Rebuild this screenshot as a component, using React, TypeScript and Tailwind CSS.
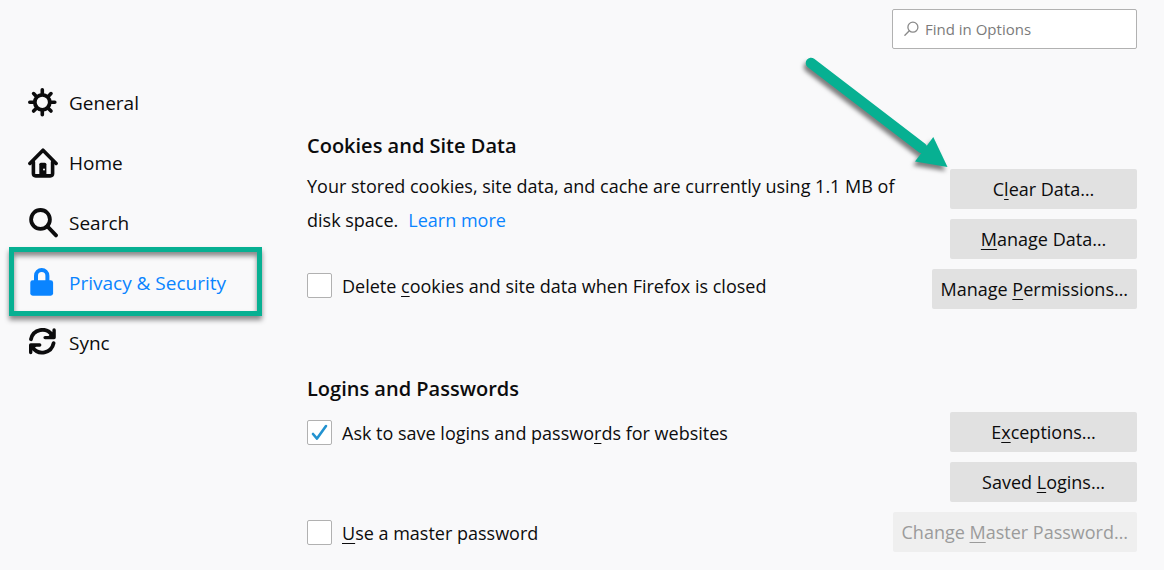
import React from "react";

type IconProps = { children: React.ReactNode };

function Icon({ children }: IconProps) {
  return (
    <svg
      viewBox="0 0 30 30"
      className="size-[30px] shrink-0"
      fill="none"
      stroke="currentColor"
      strokeLinecap="round"
      strokeLinejoin="round"
      aria-hidden="true"
    >
      {children}
    </svg>
  );
}

const gear = (
  <Icon>
    <circle cx="14.3" cy="14.3" r="7.5" strokeWidth="3.8" />
    <path
      strokeWidth="3.6"
      d="M14.3 6V1.8M14.3 22.6v4.2M6 14.3H1.8M22.6 14.3h4.2M8.4 8.4 5.6 5.6M20.2 8.4l2.8-2.8M8.4 20.2 5.6 23M20.2 20.2 23 23"
    />
  </Icon>
);

const home = (
  <Icon>
    <path strokeWidth="3.6" d="M1.9 15.4 15 2.2l13.1 13.2" />
    <path strokeWidth="3.6" d="M5.4 14v11.6q0 2.3 2.3 2.3h14.6q2.3 0 2.3-2.3V14" />
    <path
      fill="currentColor"
      stroke="none"
      d="M11.3 28.5V16.3q0-1.6 1.6-1.6h3.9q1.6 0 1.6 1.6v12.2z"
    />
    <circle cx="16" cy="21.6" r="1" fill="#f9f9fa" stroke="none" />
  </Icon>
);

const search = (
  <Icon>
    <circle cx="12.5" cy="11.4" r="9.4" strokeWidth="3.8" />
    <path strokeWidth="3.8" d="m19.4 18.4 8.6 9" />
  </Icon>
);

const lock = (
  <Icon>
    <path strokeWidth="4" strokeLinecap="butt" d="M8 14V7.7a5.7 5.7 0 0 1 11.4 0V14" />
    <rect x="2.3" y="12.3" width="22.8" height="15.4" rx="2.4" fill="currentColor" stroke="none" />
  </Icon>
);

const sync = (
  <Icon>
    <path strokeWidth="3.8" d="M3 11.2A11.6 11.6 0 0 1 24 7" />
    <path strokeWidth="3.8" d="M25.6 15.2A11.6 11.6 0 0 1 4.6 19.4" />
    <path strokeWidth="3.4" d="M26.1 2v7.6h-9" />
    <path strokeWidth="3.4" d="M2.7 24.6V17h9" />
    <path fill="currentColor" stroke="none" d="M19 9.5 26 2.5v7zM9.6 17l-7 7V17z" />
  </Icon>
);

const categories = [
  { name: "General", icon: gear },
  { name: "Home", icon: home },
  { name: "Search", icon: search },
  { name: "Privacy & Security", icon: lock, current: true },
  { name: "Sync", icon: sync },
];

function Key({ children }: { children: React.ReactNode }) {
  return <span className="underline decoration-1 underline-offset-3">{children}</span>;
}

type ActionProps = { children: React.ReactNode; disabled?: boolean };

function Action({ children, disabled }: ActionProps) {
  return (
    <button
      type="button"
      disabled={disabled}
      className="h-10 min-w-[187px] rounded-xs bg-[#e1e1e1] px-[9px] whitespace-nowrap disabled:bg-[#efefef] disabled:text-[#9b9b9b]"
    >
      {children}
    </button>
  );
}

type CheckProps = { id: string; checked?: boolean; children: React.ReactNode };

function Check({ id, checked, children }: CheckProps) {
  return (
    <div className="flex h-10 items-center gap-[10px]">
      <span className="grid shrink-0">
        <input
          id={id}
          type="checkbox"
          defaultChecked={checked}
          className="peer col-start-1 row-start-1 size-[25px] appearance-none rounded-xs border border-[#b1b1b1] bg-white"
        />
        <svg
          viewBox="0 0 25 25"
          className="pointer-events-none invisible col-start-1 row-start-1 size-[25px] peer-checked:visible"
          fill="none"
          stroke="#2292d0"
          strokeWidth="2.6"
          strokeLinecap="round"
          strokeLinejoin="round"
          aria-hidden="true"
        >
          <path d="m6 14 4 4.6L19 6" />
        </svg>
      </span>
      <label htmlFor={id} className="pt-0.5">
        {children}
      </label>
    </div>
  );
}

export default function App() {
  return (
    <div className="flex min-h-screen bg-[#f9f9fa] font-['Open_Sans','Noto_Sans',sans-serif] text-[18px] leading-[34px] text-[#0c0c0d]">
      <nav aria-label="Categories" className="w-[280px] shrink-0 pt-[73px] text-[19px]">
        <ul>
          {categories.map(({ name, icon, current }) => (
            <li key={name} className="relative">
              <a
                href="#"
                aria-current={current ? "page" : undefined}
                className="flex h-15 items-center gap-[11px] pl-7 aria-[current=page]:text-[#0a84ff]"
              >
                {icon}
                {name}
              </a>
              {current && (
                <span className="pointer-events-none absolute -top-[6px] right-[18px] -bottom-[3px] left-[9px] border-5 border-[#07b092] shadow-[0_4px_5px_rgba(0,0,0,0.45),inset_0_4px_5px_rgba(0,0,0,0.45)]" />
              )}
            </li>
          ))}
        </ul>
      </nav>

      <main className="min-w-0 flex-1 pt-[9px] pr-[27px] pl-[27px]">
        <div className="flex justify-end">
          <div className="flex h-10 w-[245px] items-center gap-[5px] rounded-xs border border-[#b1b1b1] bg-white px-[11px]">
            <svg
              viewBox="0 0 16 16"
              className="size-4 shrink-0"
              fill="none"
              stroke="#8a8a8a"
              strokeWidth="1.3"
              strokeLinecap="round"
              aria-hidden="true"
            >
              <circle cx="8.9" cy="6.2" r="5" />
              <path d="M5.3 9.8.9 14.2" />
            </svg>
            <input
              type="search"
              aria-label="Find in Options"
              placeholder="Find in Options"
              className="w-full min-w-0 bg-transparent text-[15px] leading-5 outline-none placeholder:text-[#7b7b7b]"
            />
          </div>
        </div>

        <section className="pt-20">
          <h2 className="text-[20px] font-semibold">Cookies and Site Data</h2>
          <div className="flex justify-between gap-5 pt-[6px]">
            <div className="min-w-0 flex-1">
              <p className="max-w-[600px]">
                Your stored cookies, site data, and cache are currently using 1.1 MB of disk space.
                <a href="#" className="ml-[10px] text-[#0a84ff]">
                  Learn more
                </a>
              </p>
              <div className="pt-7">
                <Check id="delete-cookies">
                  Delete <Key>c</Key>ookies and site data when Firefox is closed
                </Check>
              </div>
            </div>
            <div className="relative flex shrink-0 flex-col items-end gap-[10px]">
              <Action>
                C<Key>l</Key>ear Data…
              </Action>
              <Action>
                <Key>M</Key>anage Data…
              </Action>
              <Action>
                Manage <Key>P</Key>ermissions…
              </Action>
              <svg
                viewBox="0 0 160 130"
                className="pointer-events-none absolute right-[180px] bottom-[128px] h-[130px] w-[160px] drop-shadow-[-2px_4px_2px_rgba(0,0,0,0.5)]"
                aria-hidden="true"
              >
                <path d="M14 12 125 97" stroke="#07b092" strokeWidth="10.5" strokeLinecap="round" />
                <path d="m136.300 86 14.200 30-32.500-5.500z" fill="#07b092" />
              </svg>
            </div>
          </div>
        </section>

        <section className="pt-[63px]">
          <h2 className="text-[20px] font-semibold">Logins and Passwords</h2>
          <div className="flex justify-between gap-5 pt-[6px]">
            <div className="flex min-w-0 flex-1 flex-col gap-15">
              <Check id="save-logins" checked>
                Ask to save logins and passwo<Key>r</Key>ds for websites
              </Check>
              <Check id="master-password">
                <Key>U</Key>se a master password
              </Check>
            </div>
            <div className="flex shrink-0 flex-col items-end gap-[10px]">
              <Action>
                E<Key>x</Key>ceptions…
              </Action>
              <Action>
                Saved <Key>L</Key>ogins…
              </Action>
              <Action disabled>
                Change <Key>M</Key>aster Password…
              </Action>
            </div>
          </div>
        </section>
      </main>
    </div>
  );
}
